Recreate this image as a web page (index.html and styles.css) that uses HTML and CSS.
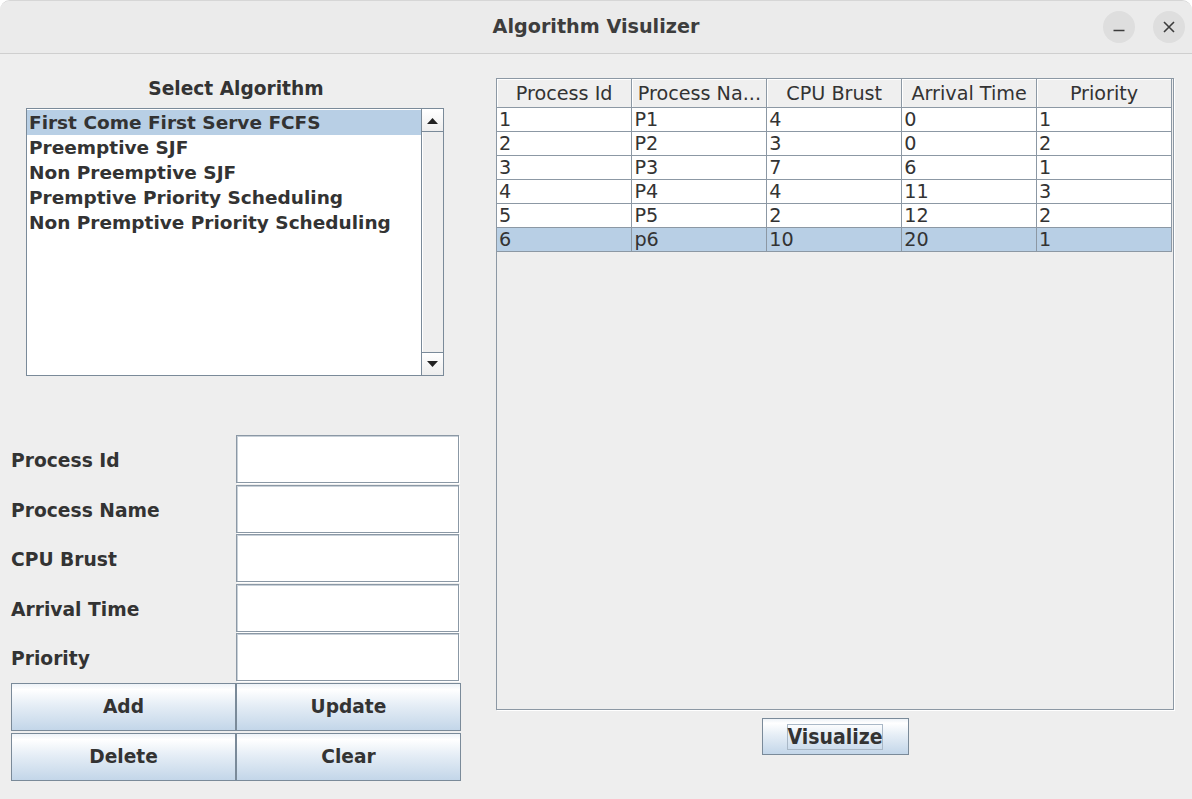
FILE: index.html
```html
<!DOCTYPE html>
<html lang="en">
<head>
<meta charset="utf-8">
<title>Algorithm Visulizer</title>
<link rel="stylesheet" href="styles.css">
</head>
<body>
<div class="window">
  <header class="titlebar">
    <div class="tb-spacer"></div>
    <h1 class="title">Algorithm Visulizer</h1>
    <div class="controls">
      <span class="wbtn" aria-label="Minimize">
        <svg width="32" height="32" viewBox="0 0 32 32"><path d="M10.5 19.5h11" stroke="#3c3c3c" stroke-width="1.5" fill="none"/></svg>
      </span>
      <span class="wbtn" aria-label="Close">
        <svg width="32" height="32" viewBox="0 0 32 32"><path d="M11 11l10 10M21 11l-10 10" stroke="#3c3c3c" stroke-width="1.6" fill="none"/></svg>
      </span>
    </div>
  </header>

  <main class="content">
    <section class="left">
      <h2 class="section-title">Select Algorithm</h2>
      <div class="listbox">
        <ul class="list">
          <li class="item selected">First Come First Serve FCFS</li>
          <li class="item">Preemptive SJF</li>
          <li class="item">Non Preemptive SJF</li>
          <li class="item">Premptive Priority Scheduling</li>
          <li class="item">Non Premptive Priority Scheduling</li>
        </ul>
        <div class="vscroll">
          <div class="sbtn">
            <svg width="11" height="6" viewBox="0 0 11 6"><path d="M0 6L5.5 0L11 6Z" fill="#222"/></svg>
          </div>
          <div class="track"></div>
          <div class="sbtn sbtn-down">
            <svg width="11" height="6" viewBox="0 0 11 6"><path d="M0 0L11 0L5.5 6Z" fill="#222"/></svg>
          </div>
        </div>
      </div>

      <div class="form">
        <label class="flabel">Process Id</label><div class="field"></div>
        <label class="flabel">Process Name</label><div class="field"></div>
        <label class="flabel">CPU Brust</label><div class="field"></div>
        <label class="flabel">Arrival Time</label><div class="field"></div>
        <label class="flabel">Priority</label><div class="field"></div>
        <button class="mbtn">Add</button><button class="mbtn">Update</button>
        <button class="mbtn">Delete</button><button class="mbtn">Clear</button>
      </div>
    </section>

    <section class="right">
      <div class="tablepane">
        <table class="grid">
          <thead>
            <tr><th>Process Id</th><th>Process Na...</th><th>CPU Brust</th><th>Arrival Time</th><th>Priority</th></tr>
          </thead>
          <tbody>
            <tr><td>1</td><td>P1</td><td>4</td><td>0</td><td>1</td></tr>
            <tr><td>2</td><td>P2</td><td>3</td><td>0</td><td>2</td></tr>
            <tr><td>3</td><td>P3</td><td>7</td><td>6</td><td>1</td></tr>
            <tr><td>4</td><td>P4</td><td>4</td><td>11</td><td>3</td></tr>
            <tr><td>5</td><td>P5</td><td>2</td><td>12</td><td>2</td></tr>
            <tr class="selected"><td>6</td><td>p6</td><td>10</td><td>20</td><td>1</td></tr>
          </tbody>
        </table>
      </div>
      <div class="actions">
        <button class="vbtn"><span class="focus">Visualize</span></button>
      </div>
    </section>
  </main>
</div>
</body>
</html>
```
FILE: styles.css
```css
* { box-sizing: border-box; }

html, body {
  margin: 0;
  padding: 0;
  background: #ffffff;
}

body {
  font-family: "DejaVu Sans", "Liberation Sans", sans-serif;
  color: #333333;
}

.window {
  width: 1192px;
  height: 799px;
  background: #eeeeee;
  border-radius: 10px 10px 0 0;
  overflow: hidden;
  display: flex;
  flex-direction: column;
  border-top: 1px solid #d6d6d6;
}

.titlebar {
  height: 53px;
  flex: 0 0 53px;
  background: #ebebeb;
  border-bottom: 1px solid #cfcfcf;
  display: grid;
  grid-template-columns: 1fr auto 1fr;
  align-items: center;
}

.title {
  margin: 0;
  font-family: "DejaVu Sans", sans-serif;
  font-weight: 700;
  font-size: 19.2px;
  color: #3d3d3d;
  padding-bottom: 1px;
}

.controls {
  display: flex;
  justify-content: flex-end;
  gap: 18px;
  padding-right: 7px;
  padding-bottom: 1px;
}

.wbtn {
  width: 32px;
  height: 32px;
  border-radius: 50%;
  background: #dedede;
  display: flex;
}

.content {
  flex: 1;
  display: flex;
  padding: 24px 0 0 11px;
  gap: 35px;
}

/* Left column */
.left {
  width: 450px;
  display: flex;
  flex-direction: column;
}

.section-title {
  margin: 0 0 8px 0;
  height: 22px;
  line-height: 22px;
  text-align: center;
  font-size: 18.6px;
  font-weight: 700;
  color: #333333;
}

.listbox {
  margin-left: 15px;
  width: 418px;
  height: 268px;
  border: 1px solid #7a8a99;
  background: #ffffff;
  display: flex;
}

.list {
  list-style: none;
  margin: 0;
  padding: 1px 0 0 0;
  flex: 1;
}

.item {
  height: 25px;
  line-height: 25px;
  padding-left: 2px;
  font-size: 18.5px;
  font-weight: 700;
  color: #333333;
  white-space: nowrap;
}

.item.selected {
  background: #b8cfe5;
}

.vscroll {
  width: 22px;
  display: flex;
  flex-direction: column;
  border-left: 1px solid #7a8a99;
  background: #eeeeee;
}

.sbtn {
  height: 23px;
  flex: 0 0 23px;
  display: flex;
  align-items: center;
  justify-content: center;
  background: linear-gradient(#ffffff, #eeeeee);
  border-top: 1px solid #ffffff;
  border-bottom: 1px solid #7a8a99;
}

.sbtn-down {
  border-top: 1px solid #7a8a99;
  border-bottom: 1px solid #eeeeee;
}

.track {
  flex: 1;
  background: #eeeeee;
  border-left: 1px solid #ffffff;
}

/* Form */
.form {
  margin-top: 59px;
  display: grid;
  grid-template-columns: 225px 225px;
  grid-auto-rows: 48px;
  row-gap: 1.6px;
}

.flabel {
  display: flex;
  align-items: center;
  padding-top: 3px;
  font-size: 18.7px;
  font-weight: 700;
  color: #333333;
}

.field {
  width: 223px;
  height: 48px;
  background: #ffffff;
  border: 1px solid #8b98a5;
  box-shadow: inset 1px 1px 0 #c8d0d8, 1px 1px 0 #ffffff;
}

.mbtn {
  margin: 0;
  height: 48px;
  font-family: "DejaVu Sans", sans-serif;
  font-size: 18.6px;
  font-weight: 700;
  color: #333333;
  border: 1px solid #7a8a99;
  background: linear-gradient(#eef3f8 0%, #ffffff 12%, #e6eef6 45%, #c3d6e9 100%);
  padding: 0;
}

/* Right column */
.right {
  width: 678px;
  display: flex;
  flex-direction: column;
}

.tablepane {
  height: 632px;
  border: 1px solid #8c98a4;
  box-shadow: 1px 1px 0 #ffffff;
  background: #eeeeee;
  overflow: hidden;
}

.grid {
  border-collapse: collapse;
  table-layout: fixed;
  width: 675px;
  font-size: 19.2px;
  color: #333333;
}

.grid th {
  height: 28px;
  font-weight: 400;
  text-align: center;
  background: #efefef;
  border: 1px solid #8c98a4;
  border-top: 0;
  box-shadow: inset 1px 1px 0 #ffffff;
  padding: 3px 0 0 0;
  line-height: 24px;
  white-space: nowrap;
}

.grid th:first-child { border-left: 0; }

.grid td {
  height: 24px;
  line-height: 22px;
  padding: 1px 0 0 2px;
  background: #ffffff;
  border: 1px solid #8c98a4;
  white-space: nowrap;
}

.grid td:first-child { border-left: 0; }

.grid tr.selected td {
  background: #b8cfe5;
}

.actions {
  display: flex;
  justify-content: center;
  padding-top: 8px;
}

.vbtn {
  width: 147px;
  height: 37px;
  margin: 0;
  padding: 0;
  border: 1px solid #7a8a99;
  background: linear-gradient(#eef3f8 0%, #ffffff 12%, #e6eef6 45%, #c3d6e9 100%);
  display: flex;
  align-items: center;
  justify-content: center;
}

.focus {
  font-family: "DejaVu Sans Condensed", "DejaVu Sans", sans-serif;
  font-stretch: condensed;
  font-weight: 700;
  font-size: 21px;
  color: #333333;
  border: 1px solid #a9b8c7;
  padding: 0;
  line-height: 24px;
}
```
